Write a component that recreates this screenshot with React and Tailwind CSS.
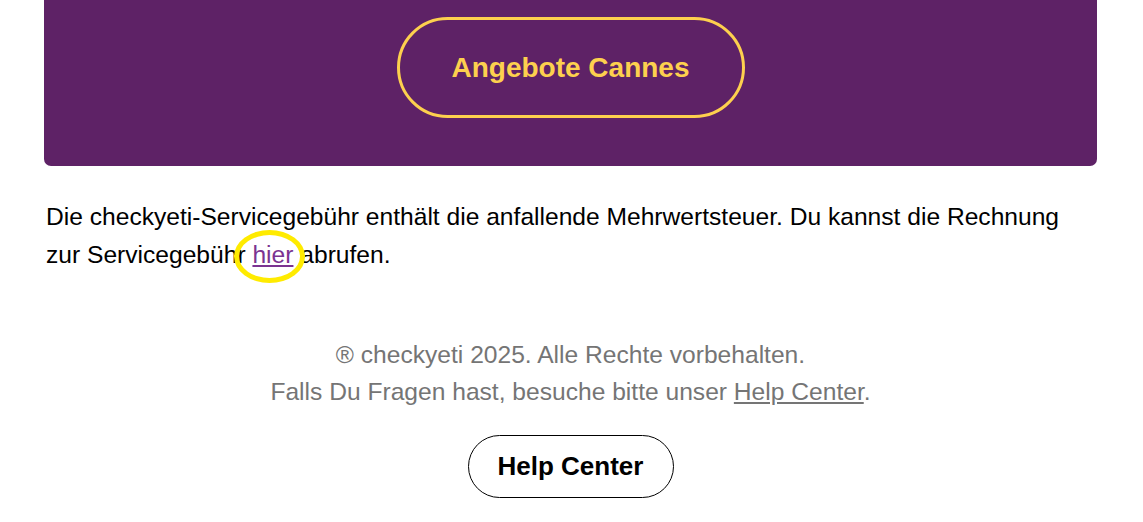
export default function App() {
  return (
    <div className="w-full bg-white" style={{ fontFamily: '"Liberation Sans", Arial, sans-serif' }}>
      <div className="ml-[44px] w-[1053px]">
        <div className="bg-[#5e2266] rounded-b-[7px] pt-[17px] pb-[48px] flex justify-center">
          <a className="w-[348px] h-[101px] rounded-full border-[3px] border-[#fdd04e] flex items-center justify-center text-[#fdd04e] font-bold text-[28px]">
            Angebote Cannes
          </a>
        </div>
        <div className="mt-[32px] pl-[2px] pr-[20px] text-[24.6px] leading-[38px] text-black">
          <p>
            Die checkyeti-Servicegebühr enthält die anfallende Mehrwertsteuer. Du kannst die Rechnung zur Servicegebühr{" "}
            <span className="relative">
              <a className="text-[#7b3391] underline">hier</a>
              <span className="absolute left-[-18px] top-[-11px] w-[71px] h-[53px] rounded-[50%] border-[5px] border-[#ffeb00]" />
            </span>{" "}
            abrufen.
          </p>
        </div>
        <div className="mt-[62px] text-center text-[24.6px] leading-[37px] text-[#757575]">
          <p>® checkyeti 2025. Alle Rechte vorbehalten.</p>
          <p>
            Falls Du Fragen hast, besuche bitte unser <a className="underline">Help Center</a>.
          </p>
        </div>
        <div className="mt-[25px] flex justify-center pb-[24px]">
          <a className="w-[206px] h-[63px] rounded-full border border-black flex items-center justify-center font-bold text-[26px] text-black">
            Help Center
          </a>
        </div>
      </div>
    </div>
  );
}
